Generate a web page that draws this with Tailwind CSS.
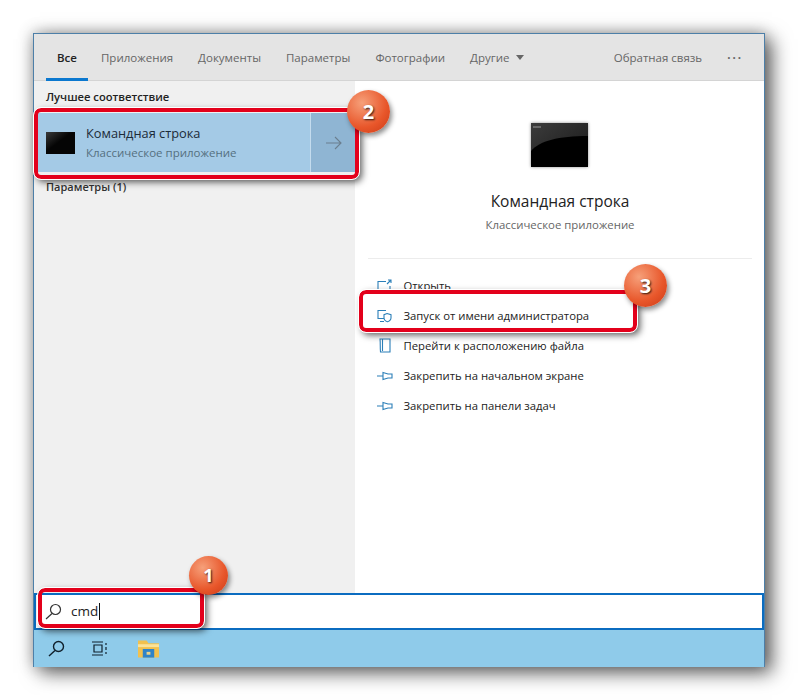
<!DOCTYPE html>
<html lang="ru">
<head>
    <meta charset="UTF-8">
    <title>Командная строка</title>
    <script src="https://cdn.jsdelivr.net/npm/@tailwindcss/browser@4"></script>
</head>
<body class="bg-white">
    <div class="relative w-[798px] h-[700px] pt-[33px] pl-[33px] font-['Open_Sans','Noto_Sans',sans-serif] overflow-hidden">
        <!-- Search window -->
        <div class="w-[732px] h-[634px] flex flex-col border-t border-x border-[#4d7fa8] shadow-[7px_6px_18px_rgba(0,0,0,0.6),-1px_-1px_14px_rgba(0,0,0,0.25)]">
            <!-- Tabs -->
            <div class="h-[47px] shrink-0 bg-[#e4e4e4] border-b border-[#d4d4d4] flex items-start text-[11.5px] text-[#666] pl-[12px] relative">
                <div class="w-[42px] h-[47px] border-b-[3px] border-[#0b78cf] flex justify-center pt-[15px] font-semibold text-[#222]">Все</div>
                <div class="flex gap-[25px] pt-[15px] pl-[13px]">
                    <span>Приложения</span>
                    <span>Документы</span>
                    <span>Параметры</span>
                    <span>Фотографии</span>
                    <span class="flex items-center gap-[7px]">Другие
                        <span class="w-0 h-0 border-x-[4.5px] border-x-transparent border-t-[5px] border-t-[#666]"></span>
                    </span>
                </div>
                <div class="ml-auto flex gap-[25px] pt-[15px] pr-[21px]">
                    <span>Обратная связь</span>
                    <span class="tracking-[2px] font-bold">···</span>
                </div>
            </div>
            <!-- Panels -->
            <div class="flex flex-1 min-h-0">
                <div class="w-[321px] shrink-0 bg-[#f0f0f0] flex flex-col">
                    <div class="h-[32px] pl-[12px] pt-[8px] text-[11.2px] font-semibold text-[#222]">Лучшее соответствие</div>
                    <div class="ml-[4px] h-[59px] flex bg-[#a4cae6]">
                        <div class="flex-1 flex items-center">
                            <svg class="ml-[8px]" width="29" height="22" viewBox="0 0 29 22">
                                <defs>
                                    <linearGradient id="cmdSmall" x1="0" y1="0" x2="1" y2="1">
                                        <stop offset="0" stop-color="#3a3a3a"/>
                                        <stop offset="0.45" stop-color="#050505"/>
                                    </linearGradient>
                                </defs>
                                <rect width="29" height="22" fill="url(#cmdSmall)"/>
                            </svg>
                            <div class="ml-[11px] flex flex-col">
                                <span class="text-[12.8px] leading-[20px] text-[#1b2b38]">Командная строка</span>
                                <span class="text-[11.5px] leading-[20px] text-[#55707f]">Классическое приложение</span>
                            </div>
                        </div>
                        <div class="w-[45px] ml-[1px] bg-[#8fb5d3] flex items-center justify-center border-l border-[#c4dcee]">
                            <svg width="17" height="14" viewBox="0 0 17 14" fill="none" stroke="#6b7f8f" stroke-width="1.1">
                                <path d="M1 7H16M10 1l6 6-6 6"/>
                            </svg>
                        </div>
                    </div>
                    <div class="pl-[12px] pt-[7px] text-[11px] font-semibold text-[#333]">Параметры (1)</div>
                </div>
                <div class="flex-1 bg-white flex flex-col items-center">
                    <svg class="mt-[42px] shadow-[0_0_3px_rgba(0,0,0,0.45)]" width="57" height="44" viewBox="0 0 57 44">
                        <defs>
                            <linearGradient id="cmdBig" x1="0" y1="0" x2="1" y2="1">
                                <stop offset="0" stop-color="#3c3c3c"/>
                                <stop offset="1" stop-color="#161616"/>
                            </linearGradient>
                        </defs>
                        <rect width="57" height="44" fill="url(#cmdBig)"/>
                        <path d="M0 28C8 18 28 13 57 13V44H0Z" fill="#000"/>
                        <path d="M2 4H10" stroke="#999" stroke-width="1"/>
                    </svg>
                    <div class="mt-[24px] ml-[1px] text-[15.5px] leading-[20px] text-[#222]">Командная строка</div>
                    <div class="mt-[5px] ml-[1px] text-[11.4px] leading-[18px] text-[#666]">Классическое приложение</div>
                    <div class="mt-[24px] w-[384px] h-px bg-[#ececec]"></div>
                    <div class="mt-[12px] w-[384px] flex flex-col text-[11.3px] text-[#222]">
                        <div class="h-[30px] flex items-center">
                            <svg class="ml-[9px]" width="16" height="14" viewBox="0 0 16 14" fill="none" stroke="#2b7fb8" stroke-width="1.1"><path d="M9 2.5H1V12.5H13V7M10 5l4-4M11 1h3v3"/></svg>
                            <span class="ml-[11px]">Открыть</span>
                        </div>
                        <div class="h-[30px] flex items-center">
                            <svg class="ml-[9px]" width="16" height="14" viewBox="0 0 16 14" fill="none" stroke="#2b7fb8" stroke-width="1.1"><path d="M9 1.5H1V9.5H7M3 12.5H7M10 4.5l4 1.2v3c0 2-1.6 3.4-3.5 4-2-.6-3.5-2-3.5-4v-3z"/></svg>
                            <span class="ml-[11px]">Запуск от имени администратора</span>
                        </div>
                        <div class="h-[30px] flex items-center">
                            <svg class="ml-[9px]" width="16" height="16" viewBox="0 0 16 16" fill="none" stroke="#2b7fb8" stroke-width="1.1"><path d="M3 1H13V14H3.5C3 10 3.5 5 3 1ZM5.5 1V13"/></svg>
                            <span class="ml-[11px]">Перейти к расположению файла</span>
                        </div>
                        <div class="h-[30px] flex items-center">
                            <svg class="ml-[9px]" width="16" height="12" viewBox="0 0 16 12" fill="none" stroke="#2b7fb8" stroke-width="1.1"><path d="M0 6H6M6 2.5L11 4H15V8H11L6 9.5Z"/></svg>
                            <span class="ml-[11px]">Закрепить на начальном экране</span>
                        </div>
                        <div class="h-[30px] flex items-center">
                            <svg class="ml-[9px]" width="16" height="12" viewBox="0 0 16 12" fill="none" stroke="#2b7fb8" stroke-width="1.1"><path d="M0 6H6M6 2.5L11 4H15V8H11L6 9.5Z"/></svg>
                            <span class="ml-[11px]">Закрепить на панели задач</span>
                        </div>
                    </div>
                </div>
            </div>
            <!-- Search box -->
            <div class="h-[37px] shrink-0 bg-white border-2 border-[#0b6cc0] flex items-center">
                <svg class="ml-[9px]" width="17" height="17" viewBox="0 0 17 17" fill="none" stroke="#333" stroke-width="1.2"><circle cx="10.5" cy="6.5" r="5"/><path d="M7 10.5L1 16"/></svg>
                <span class="ml-[9px] text-[13.5px] text-[#222]">cmd</span>
                <span class="w-px h-[17px] bg-[#111] ml-[1px]"></span>
            </div>
            <!-- Taskbar -->
            <div class="h-[37px] shrink-0 bg-[#8fcbea] flex items-center">
                <svg class="ml-[14px]" width="17" height="17" viewBox="0 0 17 17" fill="none" stroke="#10202c" stroke-width="1.4"><circle cx="10.5" cy="6.5" r="5"/><path d="M7 10.5L1 16"/></svg>
                <svg class="ml-[27px]" width="16" height="15" viewBox="0 0 16 15" fill="none" stroke="#10202c" stroke-width="1.2"><path d="M0 1H11M0 14H11M2 4H10V11H2ZM14 2V4M14 6V9M14 11V13"/></svg>
                <svg class="ml-[30px]" width="21" height="18" viewBox="0 0 22 18">
                    <path d="M0 0H9L11 3H22V18H0Z" fill="#f2c14e"/>
                    <rect x="0" y="4" width="22" height="3" fill="#fbe39a"/>
                    <rect x="5" y="9" width="12" height="9" fill="#2f83c8"/>
                    <rect x="9" y="12" width="4" height="3" fill="#e9d28a"/>
                </svg>
            </div>
        </div>

        <!-- Red highlights -->
        <div class="absolute left-[34px] top-[108px] w-[325px] h-[71px] rounded-[7px] border-[4px] border-[#e3001b] outline outline-1 outline-white shadow-[3px_3px_7px_rgba(0,0,0,0.65)]"></div>
        <div class="absolute left-[359px] top-[290px] w-[278px] h-[42px] rounded-[7px] border-[4px] border-[#e3001b] outline outline-1 outline-white shadow-[3px_3px_7px_rgba(0,0,0,0.65)]"></div>
        <div class="absolute left-[38px] top-[588px] w-[166px] h-[40px] rounded-[7px] border-[4px] border-[#e3001b] outline outline-1 outline-white shadow-[3px_3px_7px_rgba(0,0,0,0.65)]"></div>

        <!-- Number badges -->
        <div class="absolute left-[347px] top-[90px] w-[43px] h-[43px] rounded-full bg-[radial-gradient(circle_at_35%_30%,#f6a07a,#e8562a_60%,#c93a16)] shadow-[2px_3px_5px_rgba(0,0,0,0.45)] flex items-center justify-center text-white font-bold text-[20px] [text-shadow:1px_1px_2px_rgba(0,0,0,0.8)]">2</div>
        <div class="absolute left-[624px] top-[264px] w-[43px] h-[43px] rounded-full bg-[radial-gradient(circle_at_35%_30%,#f6a07a,#e8562a_60%,#c93a16)] shadow-[2px_3px_5px_rgba(0,0,0,0.45)] flex items-center justify-center text-white font-bold text-[20px] [text-shadow:1px_1px_2px_rgba(0,0,0,0.8)]">3</div>
        <div class="absolute left-[189px] top-[556px] w-[39px] h-[39px] rounded-full bg-[radial-gradient(circle_at_35%_30%,#f6a07a,#e8562a_60%,#c93a16)] shadow-[2px_3px_5px_rgba(0,0,0,0.45)] flex items-center justify-center text-white font-bold text-[18px] [text-shadow:1px_1px_2px_rgba(0,0,0,0.8)]">1</div>
    </div>
</body>
</html>
